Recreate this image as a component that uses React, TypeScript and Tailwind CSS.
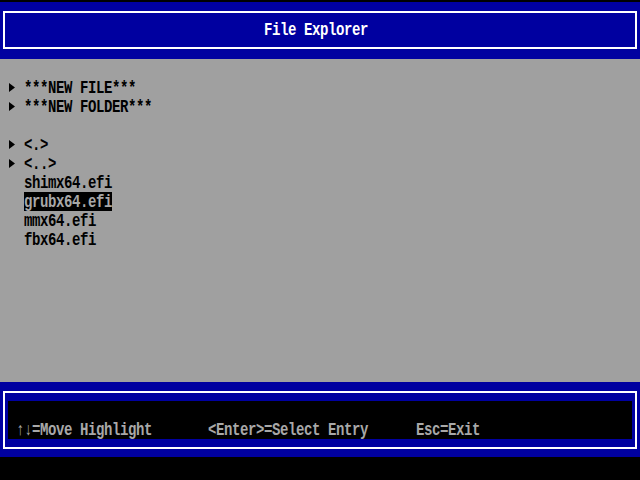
const BLUE = "bg-[#0000a0]";

type Entry = { label: string; arrow?: boolean; selected?: boolean };

const entries: (Entry | null)[] = [
  { label: "***NEW FILE***", arrow: true },
  { label: "***NEW FOLDER***", arrow: true },
  null,
  { label: "<.>", arrow: true },
  { label: "<..>", arrow: true },
  { label: "shimx64.efi" },
  { label: "grubx64.efi", selected: true },
  { label: "mmx64.efi" },
  { label: "fbx64.efi" },
];

// taller glyphs, like the 8x19 firmware font
function Txt({ children }: { children: React.ReactNode }) {
  return <span className="inline-block scale-y-125 whitespace-pre">{children}</span>;
}

function Arrow() {
  return (
    <svg width="8" height="19" viewBox="0 0 8 19" className="shrink-0">
      <polygon points="1,5 7,9.5 1,14" fill="#000" />
    </svg>
  );
}

function Row({ entry }: { entry: Entry | null }) {
  if (!entry) return <div className="h-[19px]" />;
  return (
    <div className="flex h-[19px] items-center pl-2">
      {entry.arrow ? <Arrow /> : <div className="w-2" />}
      <div className="w-2" />
      <span
        className={`flex h-[19px] items-center leading-none ${
          entry.selected ? "bg-black text-[#a8a8a8]" : "text-black"
        }`}
      >
        <Txt>{entry.label}</Txt>
      </span>
    </div>
  );
}

export default function App() {
  return (
    <div
      className="flex h-[480px] w-[640px] flex-col bg-black text-[14px] font-bold leading-none tracking-[-0.4px]"
      style={{ fontFamily: '"Liberation Mono", "DejaVu Sans Mono", monospace' }}
    >
      {/* Header */}
      <div className={`mt-[2px] h-[57px] px-[3px] pt-[9px] ${BLUE}`}>
        <div className="flex h-[38px] items-center border-2 border-white pl-[259px] text-white">
          <Txt>File Explorer</Txt>
        </div>
      </div>

      {/* File list */}
      <div className="h-[323px] bg-[#a0a0a0] pt-[19px]">
        {entries.map((e, i) => (
          <Row key={i} entry={e} />
        ))}
      </div>

      {/* Footer */}
      <div className={`h-[75px] px-[3px] pt-[9px] ${BLUE}`}>
        <div className="h-[58px] border-2 border-white px-[3px] py-2">
          <div className="flex h-[38px] flex-col bg-black">
            <div className="h-[19px]" />
            <div className="flex h-[19px] items-center pl-2 text-[#a8a8a8]">
              <Txt>{"↑↓=Move Highlight       <Enter>=Select Entry      Esc=Exit"}</Txt>
            </div>
          </div>
        </div>
      </div>
    </div>
  );
}
